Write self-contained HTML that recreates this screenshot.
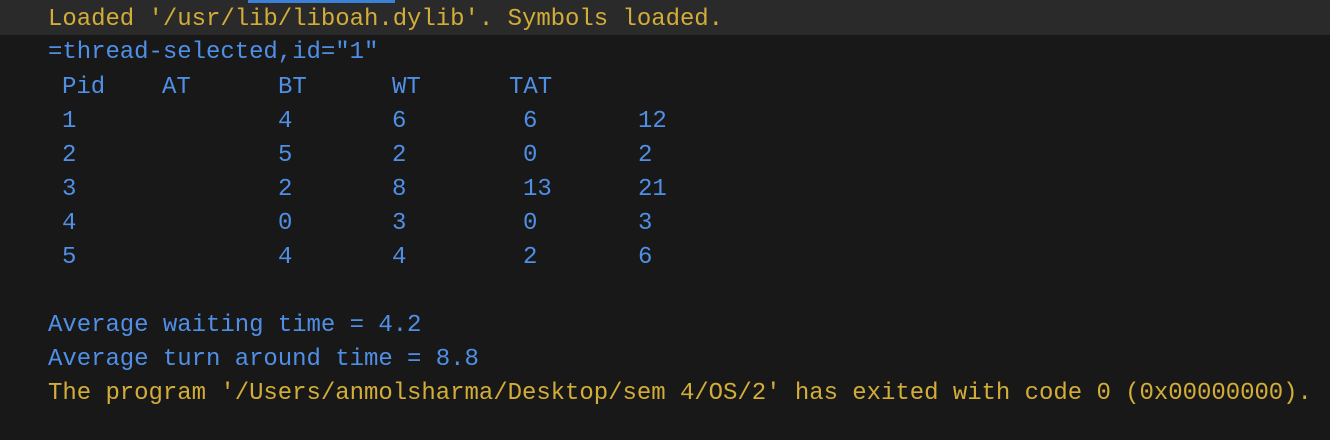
<!DOCTYPE html>
<html><head><style>
html,body{margin:0;padding:0;width:1330px;height:440px;background:#181818;overflow:hidden}
.band{position:absolute;left:0;top:0;width:1330px;height:35px;background:#2a2a2b}
.bar{position:absolute;left:248px;top:0;width:147px;height:3px;background:#3b82d6}
.l{position:absolute;left:0;height:34px;line-height:34px;font-family:"Liberation Mono",monospace;font-size:24px;letter-spacing:-0.04px;white-space:pre;width:1330px}
.l span{position:absolute;top:0}
.y{color:#d2ad38}.b{color:#4f8fe6}
</style></head><body>
<div class="band"></div><div class="bar"></div>
<div class="l y" style="top:3px"><span style="left:48px">Loaded '/usr/lib/liboah.dylib'. Symbols loaded.</span></div>
<div class="l b" style="top:36px"><span style="left:48px">=thread-selected,id="1"</span></div>
<div class="l b" style="top:71px"><span style="left:62px">Pid</span><span style="left:162px">AT</span><span style="left:278px">BT</span><span style="left:392px">WT</span><span style="left:509px">TAT</span></div>
<div class="l b" style="top:105px"><span style="left:62px">1</span><span style="left:278px">4</span><span style="left:392px">6</span><span style="left:523px">6</span><span style="left:638px">12</span></div>
<div class="l b" style="top:139px"><span style="left:62px">2</span><span style="left:278px">5</span><span style="left:392px">2</span><span style="left:523px">0</span><span style="left:638px">2</span></div>
<div class="l b" style="top:173px"><span style="left:62px">3</span><span style="left:278px">2</span><span style="left:392px">8</span><span style="left:523px">13</span><span style="left:638px">21</span></div>
<div class="l b" style="top:207px"><span style="left:62px">4</span><span style="left:278px">0</span><span style="left:392px">3</span><span style="left:523px">0</span><span style="left:638px">3</span></div>
<div class="l b" style="top:241px"><span style="left:62px">5</span><span style="left:278px">4</span><span style="left:392px">4</span><span style="left:523px">2</span><span style="left:638px">6</span></div>
<div class="l b" style="top:309px"><span style="left:48px">Average waiting time = 4.2</span></div>
<div class="l b" style="top:343px"><span style="left:48px">Average turn around time = 8.8</span></div>
<div class="l y" style="top:377px"><span style="left:48px">The program '/Users/anmolsharma/Desktop/sem 4/OS/2' has exited with code 0 (0x00000000).</span></div>
</body></html>
